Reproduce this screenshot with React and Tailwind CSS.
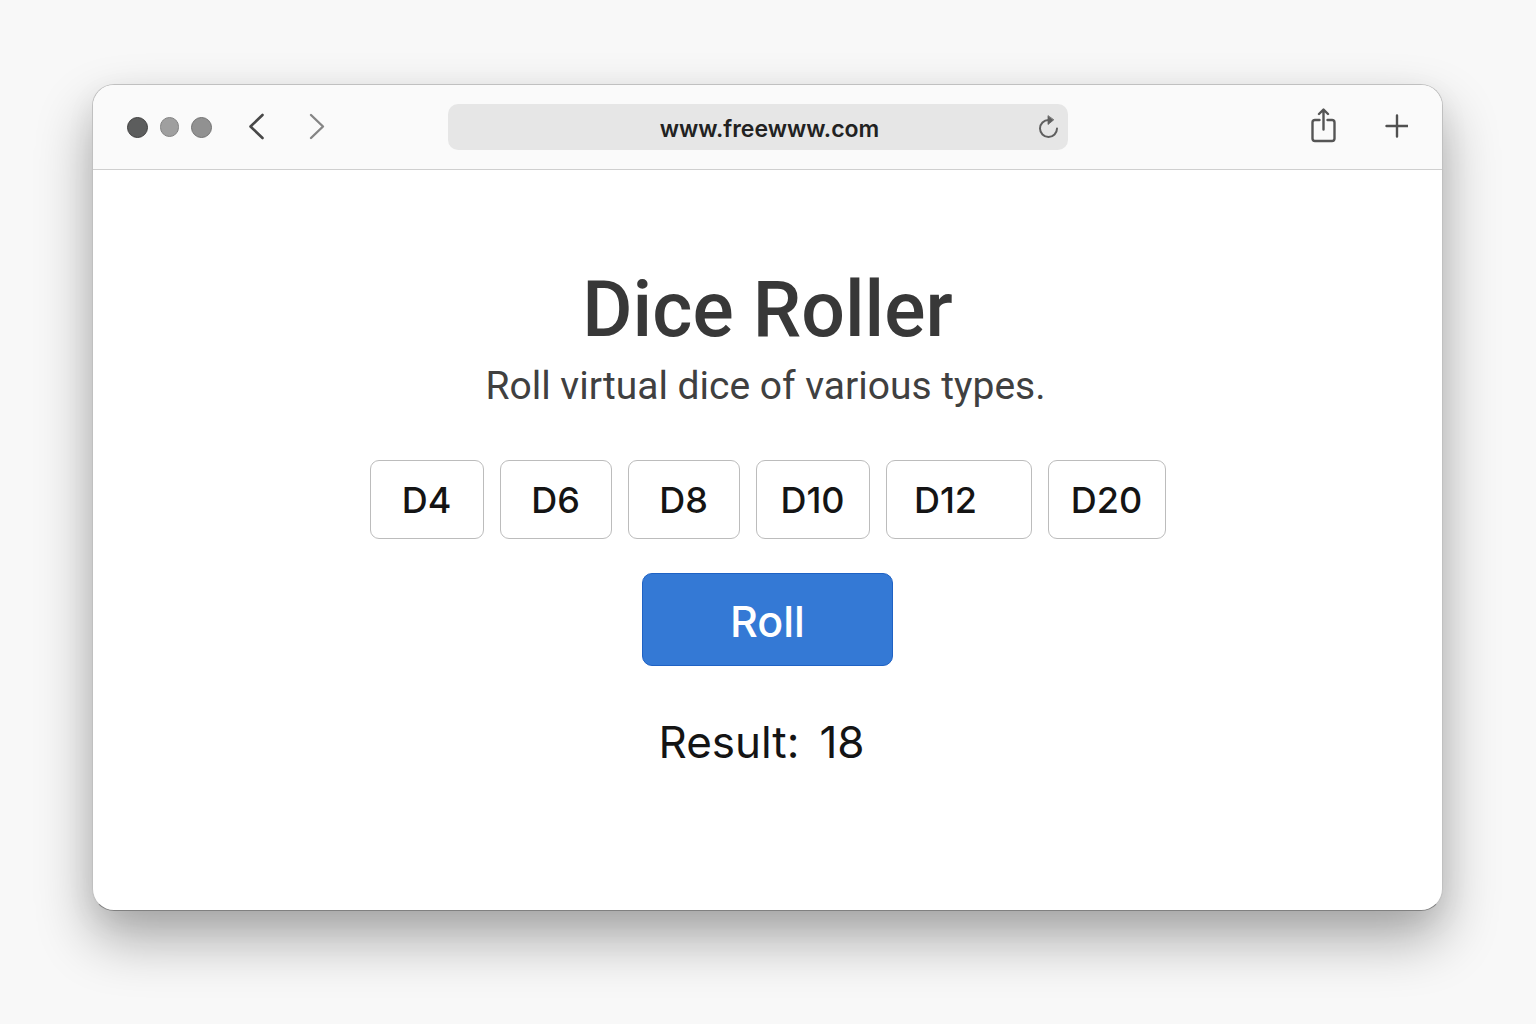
import React, { useState } from 'react';

const dice = [
  { sides: 4, width: 'w-[114px]' },
  { sides: 6, width: 'w-[112px]' },
  { sides: 8, width: 'w-[112px]' },
  { sides: 10, width: 'w-[114px]' },
  { sides: 12, width: 'w-[146px] pr-[26px]' },
  { sides: 20, width: 'w-[118px]' },
];

const BrowserBar = () => {
  const [url, setUrl] = useState('www.freewww.com');

  return (
    <header className="flex h-[85px] items-center border-b border-[#cfcfcf] bg-[#fafafa] px-[34px]">
      <div className="flex flex-1 items-center">
        <div className="flex items-center gap-3">
          <span className="size-[21px] rounded-full border border-[#3f3f3f] bg-[#5c5d5d]" />
          <span className="h-[20px] w-[19px] rounded-full border border-[#838383] bg-[#9f9f9f]" />
          <span className="size-[21px] rounded-full border border-[#727272] bg-[#919191]" />
        </div>
        <button type="button" aria-label="Back" className="ml-8">
          <svg width="26" height="30" viewBox="0 0 26 30" fill="none" stroke="#484848" strokeWidth="2.6" strokeLinecap="round" strokeLinejoin="round">
            <path d="M18.500 3 6.500 14.500l12 11.500" />
          </svg>
        </button>
        <button type="button" aria-label="Forward" className="ml-8">
          <svg width="26" height="30" viewBox="0 0 26 30" fill="none" stroke="#858585" strokeWidth="2.4" strokeLinecap="round" strokeLinejoin="round">
            <path d="m9 3 12 11.500L9 26" />
          </svg>
        </button>
      </div>

      <div className="mr-5 flex h-[46px] w-[620px] items-center rounded-[10px] bg-[#e6e6e6] pr-2 pl-14">
        <input
          type="text"
          aria-label="Address"
          value={url}
          onChange={(e) => setUrl(e.target.value)}
          className="min-w-0 flex-1 bg-transparent pt-1 text-center text-[23px] font-semibold text-[#222] outline-none"
        />
        <button type="button" aria-label="Reload">
          <svg width="24" height="26" viewBox="0 0 24 26" fill="none" stroke="#5f5f5f" strokeWidth="2" strokeLinecap="round">
            <path d="M12.500 6a8.500 8.500 0 1 0 8.500 8.500" />
            <path d="M12 2v8.500l5.500-4.500z" fill="#5f5f5f" strokeWidth="0.8" strokeLinejoin="round" />
          </svg>
        </button>
      </div>

      <div className="flex flex-1 items-center justify-end gap-12">
        <button type="button" aria-label="Share">
          <svg width="26" height="38" viewBox="0 0 26 38" fill="none" stroke="#555" strokeWidth="2.4" strokeLinecap="round" strokeLinejoin="round">
            <path d="M9.500 12H5a2.500 2.500 0 0 0-2.500 2.500v16A2.500 2.500 0 0 0 5 33h17a2.500 2.500 0 0 0 2.500-2.500v-16A2.500 2.500 0 0 0 22 12h-4.500" />
            <path d="M13.500 21.500V2M9 6l4.500-4.500L18 6" />
          </svg>
        </button>
        <button type="button" aria-label="New tab">
          <svg width="24" height="26" viewBox="0 0 24 26" fill="none" stroke="#505050" strokeWidth="2.4" strokeLinecap="round">
            <path d="M13 1.500v21M2.500 12h21" />
          </svg>
        </button>
      </div>
    </header>
  );
};

const App = () => {
  const [sides, setSides] = useState(20);
  const [result, setResult] = useState(18);

  const roll = () => {
    setResult(Math.floor(Math.random() * sides) + 1);
  };

  return (
    <div className="min-h-screen bg-[#f8f8f8] pt-[84px] pr-[93px] pb-[113px] pl-[92px] font-['Inter',sans-serif]">
      <div className="overflow-hidden rounded-[22px] border border-[#c0c0c0] border-b-[#808080] bg-white shadow-[0_28px_56px_rgba(0,0,0,0.32),0_10px_30px_rgba(0,0,0,0.06)]">
        <BrowserBar />

        <main className="flex flex-col items-center pt-[94px] pb-[140px] text-[#141414]">
          <h1 className="font-['Roboto',sans-serif] text-[77px] leading-[92px] font-medium text-[#383838]">Dice Roller</h1>
          <p className="mt-1 pr-1 font-['Roboto',sans-serif] text-[39px] leading-[52px] text-[#404040]">Roll virtual dice of various types.</p>

          <div className="mt-12 flex gap-4">
            {dice.map((die) => (
              <button
                key={die.sides}
                type="button"
                aria-pressed={sides === die.sides}
                onClick={() => setSides(die.sides)}
                className={`h-[79px] rounded-[9px] border border-[#bcbcbc] text-[36px] font-medium ${die.width}`}
              >
                D{die.sides}
              </button>
            ))}
          </div>

          <button
            type="button"
            onClick={roll}
            className="mt-[34px] h-[93px] w-[251px] rounded-[10px] border border-[#1f62c4] bg-[#3479d5] pt-1 text-[43px] font-medium text-white"
          >
            Roll
          </button>

          <p className="mt-12 flex gap-5 pr-3 text-[44px] leading-[56px]">
            <span>Result:</span>
            <span>{result}</span>
          </p>
        </main>
      </div>
    </div>
  );
};

export default App;
